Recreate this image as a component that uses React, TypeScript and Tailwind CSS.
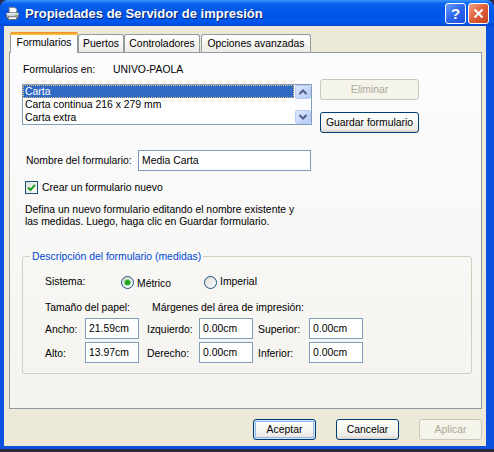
import React from "react";

function XPButton({
  label,
  className,
  disabled,
  isDefault,
}: {
  label: string;
  className: string;
  disabled?: boolean;
  isDefault?: boolean;
}) {
  const look = disabled
    ? "border-[#C9C7BA] bg-[#F5F4EA] text-[#ACA899]"
    : isDefault
    ? "border-[#003C74] bg-[linear-gradient(to_bottom,#FFFFFF_0%,#F7F7F4_50%,#ECEBE6_85%,#D6D0C5_100%)] shadow-[inset_0_0_0_1px_#CEE7FF,inset_0_0_0_2px_#98B8EA]"
    : "border-[#003C74] bg-[linear-gradient(to_bottom,#FFFFFF_0%,#F7F7F4_50%,#ECEBE6_85%,#D6D0C5_100%)]";
  return (
    <div
      className={
        "flex h-[21px] items-center justify-center rounded-[3px] border " +
        look +
        " " +
        className
      }
    >
      {label}
    </div>
  );
}

function TextBox({ value, className }: { value: string; className: string }) {
  return (
    <div
      className={
        "flex h-[21px] items-center border border-[#7F9DB9] bg-white pl-[3px] " +
        className
      }
    >
      {value}
    </div>
  );
}

function Radio({ checked }: { checked?: boolean }) {
  return (
    <div className="flex h-[13px] w-[13px] shrink-0 items-center justify-center rounded-full border border-[#1C5180] bg-[linear-gradient(135deg,#DCDCD7,#FFFFFF)]">
      {checked && (
        <div className="h-[5px] w-[5px] rounded-full bg-[#21A121] shadow-[0_0_0_1px_#8ED58E]" />
      )}
    </div>
  );
}

function ScrollBtn({ up }: { up?: boolean }) {
  return (
    <div className="flex h-[14px] w-[16px] items-center justify-center rounded-[2px] border border-[#B9CBF3] bg-[linear-gradient(135deg,#DCE6FD,#B5C9F8)]">
      <svg width="10" height="8" viewBox="0 0 10 8">
        <path
          d={up ? "M1.5 6 L5 2.5 L8.5 6" : "M1.5 2 L5 5.5 L8.5 2"}
          fill="none"
          stroke="#4D6185"
          strokeWidth="2"
        />
      </svg>
    </div>
  );
}

function SizeRow({
  l1,
  v1,
  l2,
  v2,
  l3,
  v3,
}: {
  l1: string;
  v1: string;
  l2: string;
  v2: string;
  l3: string;
  v3: string;
}) {
  return (
    <div className="flex h-[21px] items-center">
      <div className="w-[40px] pt-[3px]">{l1}</div>
      <TextBox value={v1} className="w-[54px]" />
      <div className="ml-[8px] w-[52px] pt-[3px]">{l2}</div>
      <TextBox value={v2} className="w-[54px]" />
      <div className="ml-[5px] w-[51px] pt-[3px]">{l3}</div>
      <TextBox value={v3} className="w-[54px]" />
    </div>
  );
}

export default function App() {
  return (
    <div className="h-[452px] w-[494px] overflow-hidden bg-[#2B2A45] font-['Liberation_Sans',Arial,sans-serif] text-[10.4px] text-black">
      <div className="flex h-[449px] flex-col overflow-hidden rounded-t-[8px] bg-[#0A53E0]">
        {/* Title bar */}
        <div className="flex h-[26px] shrink-0 items-center bg-[linear-gradient(to_bottom,#3D95FF_0%,#0A64F0_14%,#0055E5_45%,#0058EE_85%,#0046D1_100%)] pl-[5px] pr-[5px]">
          <svg width="15" height="15" viewBox="0 0 16 16">
            <path d="M4.5 1.5h6l2 2v4h-8z" fill="#FFFFFF" stroke="#8A8A8A" />
            <path d="M1.5 7.5h13v5h-13z" fill="#C9CDD6" stroke="#4E5563" />
            <path d="M1.5 7.5h13v1.5h-13z" fill="#E8EAEE" />
            <rect x="3.5" y="11.5" width="9" height="3" fill="#FFFFFF" stroke="#6A6A6A" />
            <rect x="11" y="9.3" width="2" height="1.2" fill="#3BAF3B" />
          </svg>
          <div className="ml-[5px] text-[13px] font-bold leading-none text-white [text-shadow:1px_1px_0_#0A1F6E]">
            Propiedades de Servidor de impresión
          </div>
          <div className="flex-1" />
          <div className="flex gap-[2px]">
            <div className="flex h-[21px] w-[21px] items-center justify-center rounded-[3px] border border-white bg-[linear-gradient(135deg,#6D9CF7_0%,#2E66EE_50%,#1C4FD8_100%)] text-[15px] font-bold leading-none text-white">
              ?
            </div>
            <div className="flex h-[21px] w-[21px] items-center justify-center rounded-[3px] border border-white bg-[linear-gradient(135deg,#F1A58A_0%,#E0633C_45%,#C4401B_100%)]">
              <svg width="11" height="11" viewBox="0 0 11 11">
                <path d="M1.5 1.5 L9.5 9.5 M9.5 1.5 L1.5 9.5" stroke="#FFFFFF" strokeWidth="2" />
              </svg>
            </div>
          </div>
        </div>

        {/* Body */}
        <div className="mb-[3px] ml-[4px] mr-[8px] flex flex-1 flex-col bg-[#ECE9D8]">
          {/* Tabs */}
          <div className="flex h-[26px] items-end pl-[6px]">
            <div className="relative z-10 -mb-[1px] flex h-[21px] w-[68px] flex-col rounded-t-[3px] border-x border-[#919B9C] bg-[#FCFCFE]">
              <div className="-mx-[1px] h-[3px] rounded-t-[3px] bg-[linear-gradient(to_bottom,#E68B2C,#FFC73C)]" />
              <div className="flex flex-1 items-center justify-center pb-[2px]">Formularios</div>
            </div>
            <div className="flex h-[18px] w-[46px] items-center justify-center rounded-t-[3px] border-x border-t border-[#919B9C] bg-[linear-gradient(to_bottom,#FFFFFF,#ECEBE6)]">
              Puertos
            </div>
            <div className="flex h-[18px] w-[76px] items-center justify-center rounded-t-[3px] border-x border-t border-[#919B9C] bg-[linear-gradient(to_bottom,#FFFFFF,#ECEBE6)]">
              Controladores
            </div>
            <div className="ml-[1px] flex h-[18px] w-[110px] items-center justify-center rounded-t-[3px] border-x border-t border-[#919B9C] bg-[linear-gradient(to_bottom,#FFFFFF,#ECEBE6)]">
              Opciones avanzadas
            </div>
          </div>

          {/* Tab panel */}
          <div className="ml-[5px] h-[357px] w-[473px] border border-[#919B9C] bg-[linear-gradient(to_bottom,#FCFCFE,#F4F3EE)] pl-[12px] pt-[10px]">
            <div className="ml-[1px] flex h-[14px] items-center">
              <div className="w-[90px]">Formularios en:</div>
              <div>UNIVO-PAOLA</div>
            </div>

            <div className="mt-[2px] flex">
              <div className="mt-[5px] flex h-[41px] w-[290px] border border-[#7F9DB9] bg-white p-0">
                <div className="flex flex-1 flex-col">
                  <div className="flex h-[13px] items-center border border-dotted border-[#E7C27A] bg-[#316AC5] pl-[1px] text-white">
                    Carta
                  </div>
                  <div className="flex h-[13px] items-center pl-[2px]">Carta continua 216 x 279 mm</div>
                  <div className="flex h-[13px] items-center pl-[2px]">Carta extra</div>
                </div>
                <div className="flex w-[17px] flex-col justify-between bg-[#FCFCFE] pl-[1px]">
                  <ScrollBtn up />
                  <ScrollBtn />
                </div>
              </div>
              <div className="ml-[8px] flex flex-col gap-[12px]">
                <XPButton label="Eliminar" className="w-[99px]" disabled />
                <XPButton label="Guardar formulario" className="w-[99px]" />
              </div>
            </div>

            <div className="mt-[17px] flex h-[21px] items-center">
              <div className="ml-[4px] w-[112px]">Nombre del formulario:</div>
              <TextBox value="Media Carta" className="w-[173px]" />
            </div>

            <div className="ml-[3px] mt-[10px] flex h-[13px] items-center">
              <div className="flex h-[13px] w-[13px] items-center justify-center border border-[#1C5180] bg-[linear-gradient(135deg,#DCDCD7,#FFFFFF)]">
                <svg width="9" height="9" viewBox="0 0 9 9">
                  <path d="M1 4.5 L3.5 7 L8 1.8" fill="none" stroke="#21A121" strokeWidth="2" />
                </svg>
              </div>
              <div className="ml-[4px]">Crear un formulario nuevo</div>
            </div>

            <div className="ml-[3px] mt-[10px] leading-[12px]">
              <div>Defina un nuevo formulario editando el nombre existente y</div>
              <div>las medidas. Luego, haga clic en Guardar formulario.</div>
            </div>

            {/* Group box */}
            <div className="relative mt-[28px] w-[450px] rounded-[3px] border border-[#D0D0BF] pb-[10px] pl-[22px] pt-[18px]">
              <div className="absolute -top-[7px] left-[7px] bg-[#F8F8F5] px-[2px] leading-[13px] text-[#0046D5]">
                Descripción del formulario (medidas)
              </div>
              <div className="flex h-[14px] items-center">
                <div className="w-[76px]">Sistema:</div>
                <div className="flex w-[83px] items-center">
                  <Radio checked />
                  <div className="ml-[3px] pt-[3px]">Métrico</div>
                </div>
                <div className="flex items-center">
                  <Radio />
                  <div className="ml-[3px]">Imperial</div>
                </div>
              </div>
              <div className="mt-[12px] flex h-[14px] items-center">
                <div className="w-[107px]">Tamaño del papel:</div>
                <div>Márgenes del área de impresión:</div>
              </div>
              <div className="mt-[3px] flex flex-col gap-[3px]">
                <SizeRow l1="Ancho:" v1="21.59cm" l2="Izquierdo:" v2="0.00cm" l3="Superior:" v3="0.00cm" />
                <SizeRow l1="Alto:" v1="13.97cm" l2="Derecho:" v2="0.00cm" l3="Inferior:" v3="0.00cm" />
              </div>
            </div>
          </div>

          {/* Bottom buttons */}
          <div className="mt-[10px] flex justify-end gap-[20px] pr-[4px]">
            <XPButton label="Aceptar" className="w-[63px]" isDefault />
            <XPButton label="Cancelar" className="w-[63px]" />
            <XPButton label="Aplicar" className="w-[63px]" disabled />
          </div>
        </div>
      </div>
    </div>
  );
}
